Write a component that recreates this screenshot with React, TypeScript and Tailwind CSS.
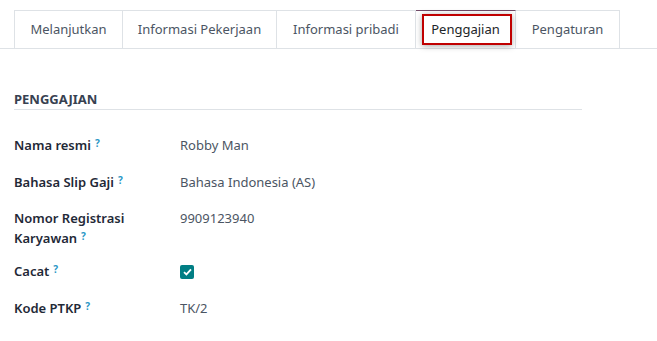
import React from "react";

const Q = () => (
  <sup className="ml-[4px] text-[10px] font-bold text-[#2a97c6] relative top-[-3px]">?</sup>
);

export default function App() {
  const tabs = [
    { name: "Melanjutkan", w: "w-[109px]" },
    { name: "Informasi Pekerjaan", w: "w-[154px]" },
    { name: "Informasi pribadi", w: "w-[139px]" },
    { name: "Penggajian", w: "w-[100px]", active: true },
    { name: "Pengaturan", w: "w-[104px]" },
  ];
  return (
    <div
      className="w-[657px] h-[341px] bg-white overflow-hidden text-[13px] text-[#212529]"
      style={{ fontFamily: '"Noto Sans", "Open Sans", sans-serif' }}
    >
      <div className="flex pl-[14px] pt-[10px] border-b border-[#dee2e6]">
        {tabs.map((t, i) => (
          <div
            key={t.name}
            className={
              t.active
                ? `relative ${t.w} h-[38px] -mb-px bg-white border-t border-t-[#714b67] border-r border-r-[#dee2e6] flex items-center justify-center text-[#212529]`
                : `${t.w} h-[38px] border-t border-r border-[#dee2e6] ${i === 0 ? "border-l" : ""} flex items-center justify-center text-[#4b5563]`
            }
          >
            {t.name}
            {t.active && (
              <div className="absolute left-[6px] top-[3px] w-[90px] h-[31px] border-2 border-[#c00000] shadow-[0_1px_6px_rgba(0,0,0,0.35)]" />
            )}
          </div>
        ))}
      </div>

      <div className="pl-[14px]">
        <div className="w-[568px] mt-[41px] pb-[1px] border-b border-[#dee2e6] text-[13px] font-bold text-[#374151] leading-[18px]">
          PENGGAJIAN
        </div>

        <div className="leading-[20px]">
          <div className="flex mt-[25px]">
            <div className="w-[166px] font-semibold text-[#1f2937]">
              Nama resmi<Q />
            </div>
            <div className="text-[#4b5563]">Robby Man</div>
          </div>
          <div className="flex mt-[17px]">
            <div className="w-[166px] font-semibold text-[#1f2937]">
              Bahasa Slip Gaji<Q />
            </div>
            <div className="text-[#4b5563]">Bahasa Indonesia (AS)</div>
          </div>
          <div className="flex mt-[16px]">
            <div className="w-[166px] font-semibold text-[#1f2937]">
              Nomor Registrasi
              <br />
              Karyawan<Q />
            </div>
            <div className="text-[#4b5563]">9909123940</div>
          </div>
          <div className="flex mt-[13px] items-center">
            <div className="w-[166px] font-semibold text-[#1f2937]">
              Cacat<Q />
            </div>
            <div className="w-[14px] h-[14px] bg-[#017e84] rounded-[2px] flex items-center justify-center mt-[1px]">
              <svg width="9" height="8" viewBox="0 0 9 8">
                <path d="M1 4.2 L3.4 6.4 L8 1.4" stroke="white" strokeWidth="1.8" fill="none" />
              </svg>
            </div>
          </div>
          <div className="flex mt-[17px]">
            <div className="w-[166px] font-semibold text-[#1f2937]">
              Kode PTKP<Q />
            </div>
            <div className="text-[#4b5563]">TK/2</div>
          </div>
        </div>
      </div>
    </div>
  );
}
